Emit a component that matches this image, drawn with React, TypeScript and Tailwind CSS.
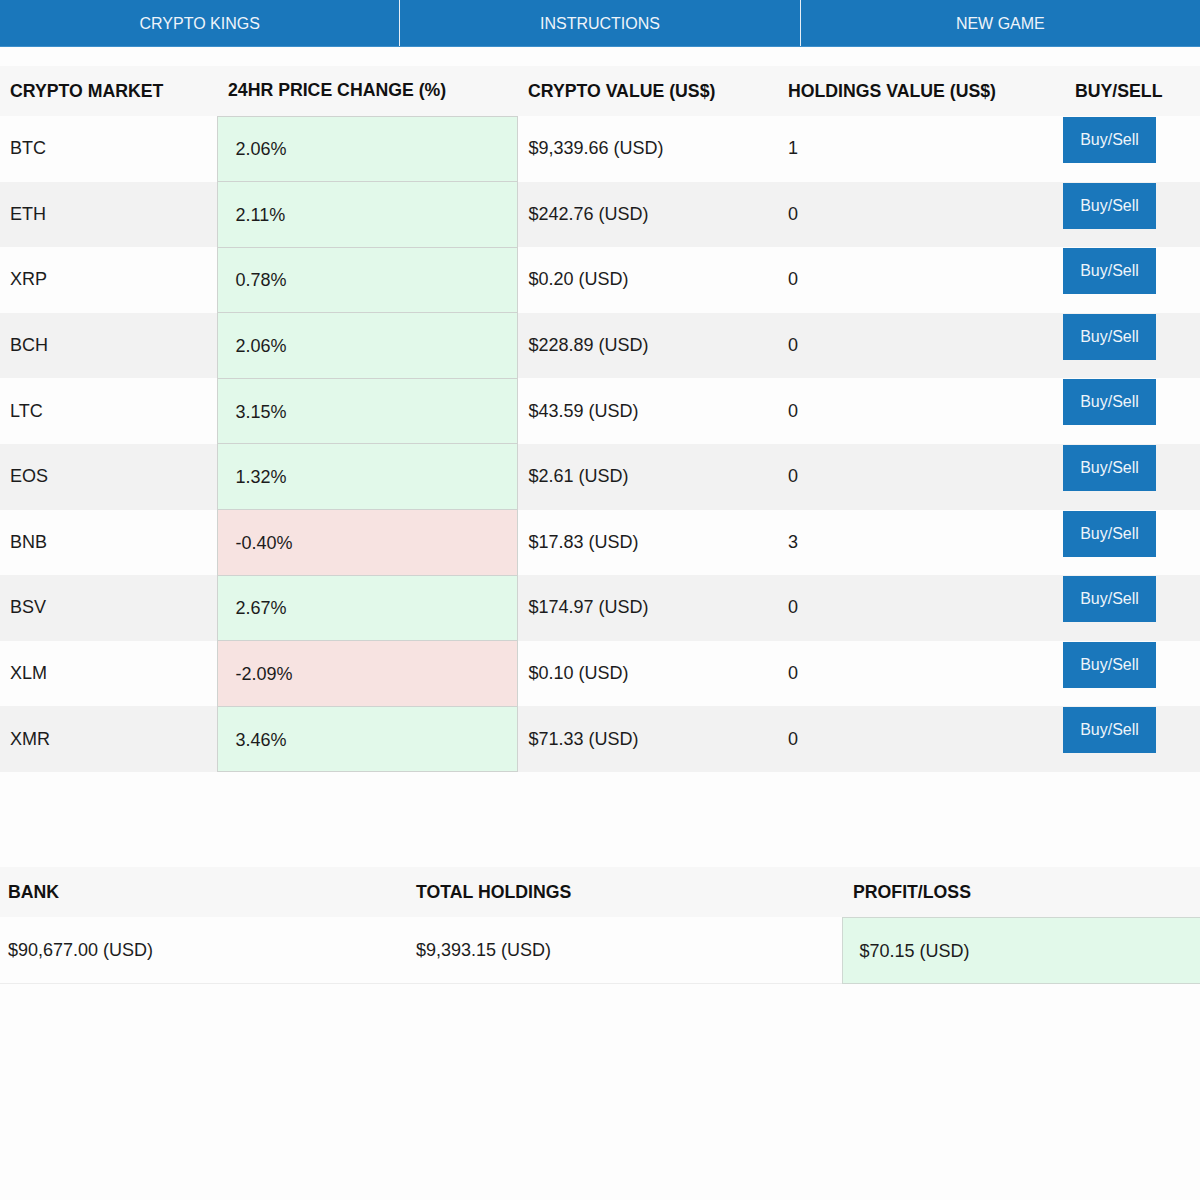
import React from "react";

type Coin = { sym: string; change: number; value: string; holdings: string };

const coins: Coin[] = [
  { sym: "BTC", change: 2.06, value: "$9,339.66 (USD)", holdings: "1" },
  { sym: "ETH", change: 2.11, value: "$242.76 (USD)", holdings: "0" },
  { sym: "XRP", change: 0.78, value: "$0.20 (USD)", holdings: "0" },
  { sym: "BCH", change: 2.06, value: "$228.89 (USD)", holdings: "0" },
  { sym: "LTC", change: 3.15, value: "$43.59 (USD)", holdings: "0" },
  { sym: "EOS", change: 1.32, value: "$2.61 (USD)", holdings: "0" },
  { sym: "BNB", change: -0.4, value: "$17.83 (USD)", holdings: "3" },
  { sym: "BSV", change: 2.67, value: "$174.97 (USD)", holdings: "0" },
  { sym: "XLM", change: -2.09, value: "$0.10 (USD)", holdings: "0" },
  { sym: "XMR", change: 3.46, value: "$71.33 (USD)", holdings: "0" },
];

const navItems = ["CRYPTO KINGS", "INSTRUCTIONS", "NEW GAME"];

export default function App() {
  return (
    <div className="min-h-[1200px] bg-[#fdfdfd] font-['Liberation_Sans',Arial,sans-serif] text-[#1c1c1c]">
      <nav className="flex h-[47px] border-b border-[#3d8fcb] bg-[#1a77bb]">
        {navItems.map((item, i) => (
          <div
            key={item}
            className={
              "flex flex-1 items-center justify-center pt-[2px] text-[16px] text-[#eef4fa]" +
              (i > 0 ? " border-l border-[#e6eef6]" : "")
            }
          >
            {item}
          </div>
        ))}
      </nav>

      <table className="mt-[19px] w-full table-fixed border-collapse">
        <colgroup>
          <col className="w-[217px]" />
          <col className="w-[300px]" />
          <col className="w-[261px]" />
          <col className="w-[285px]" />
          <col className="w-[137px]" />
        </colgroup>
        <thead>
          <tr className="h-[50px] bg-[#f7f7f7] text-left text-[17.7px] font-bold text-[#111]">
            <th className="pl-[10px]">CRYPTO MARKET</th>
            <th className="pl-[11px]">24HR PRICE CHANGE (%)</th>
            <th className="pl-[11px]">CRYPTO VALUE (US$)</th>
            <th className="pl-[10px]">HOLDINGS VALUE (US$)</th>
            <th className="pl-[12px]">BUY/SELL</th>
          </tr>
        </thead>
        <tbody>
          {coins.map((c, i) => {
            const up = c.change >= 0;
            return (
              <tr
                key={c.sym}
                className={"h-[65.6px] text-[18px] " + (i % 2 ? "bg-[#f2f2f2]" : "bg-[#fdfdfd]")}
              >
                <td className="pl-[10px]">{c.sym}</td>
                <td
                  className={
                    "border border-[#cfd3d0] pt-[2px] pl-[18px] " +
                    (up ? "bg-[#e2f9ea]" : "bg-[#f7e3e1]")
                  }
                >
                  {c.change.toFixed(2)}%
                </td>
                <td className="pl-[11px]">{c.value}</td>
                <td className="pl-[10px]">{c.holdings}</td>
                <td className="p-0 align-top">
                  <button className="mt-px h-[46px] w-[93px] bg-[#1a77bb] text-[16px] text-[#eef4fa]">
                    Buy/Sell
                  </button>
                </td>
              </tr>
            );
          })}
        </tbody>
      </table>

      <table className="mt-[95px] w-full table-fixed border-collapse">
        <colgroup>
          <col className="w-[408px]" />
          <col className="w-[434px]" />
          <col className="w-[358px]" />
        </colgroup>
        <thead>
          <tr className="h-[50px] bg-[#f7f7f7] text-left text-[17.7px] font-bold text-[#111]">
            <th className="pl-[8px]">BANK</th>
            <th className="pl-[8px]">TOTAL HOLDINGS</th>
            <th className="pl-[11px]">PROFIT/LOSS</th>
          </tr>
        </thead>
        <tbody>
          <tr className="h-[66px] border-b border-[#ededed] text-[18px]">
            <td className="pl-[8px]">$90,677.00 (USD)</td>
            <td className="pl-[8px]">$9,393.15 (USD)</td>
            <td className="border border-[#cfd8d2] bg-[#e2f9ea] pt-[2px] pl-[17px]">$70.15 (USD)</td>
          </tr>
        </tbody>
      </table>
    </div>
  );
}
